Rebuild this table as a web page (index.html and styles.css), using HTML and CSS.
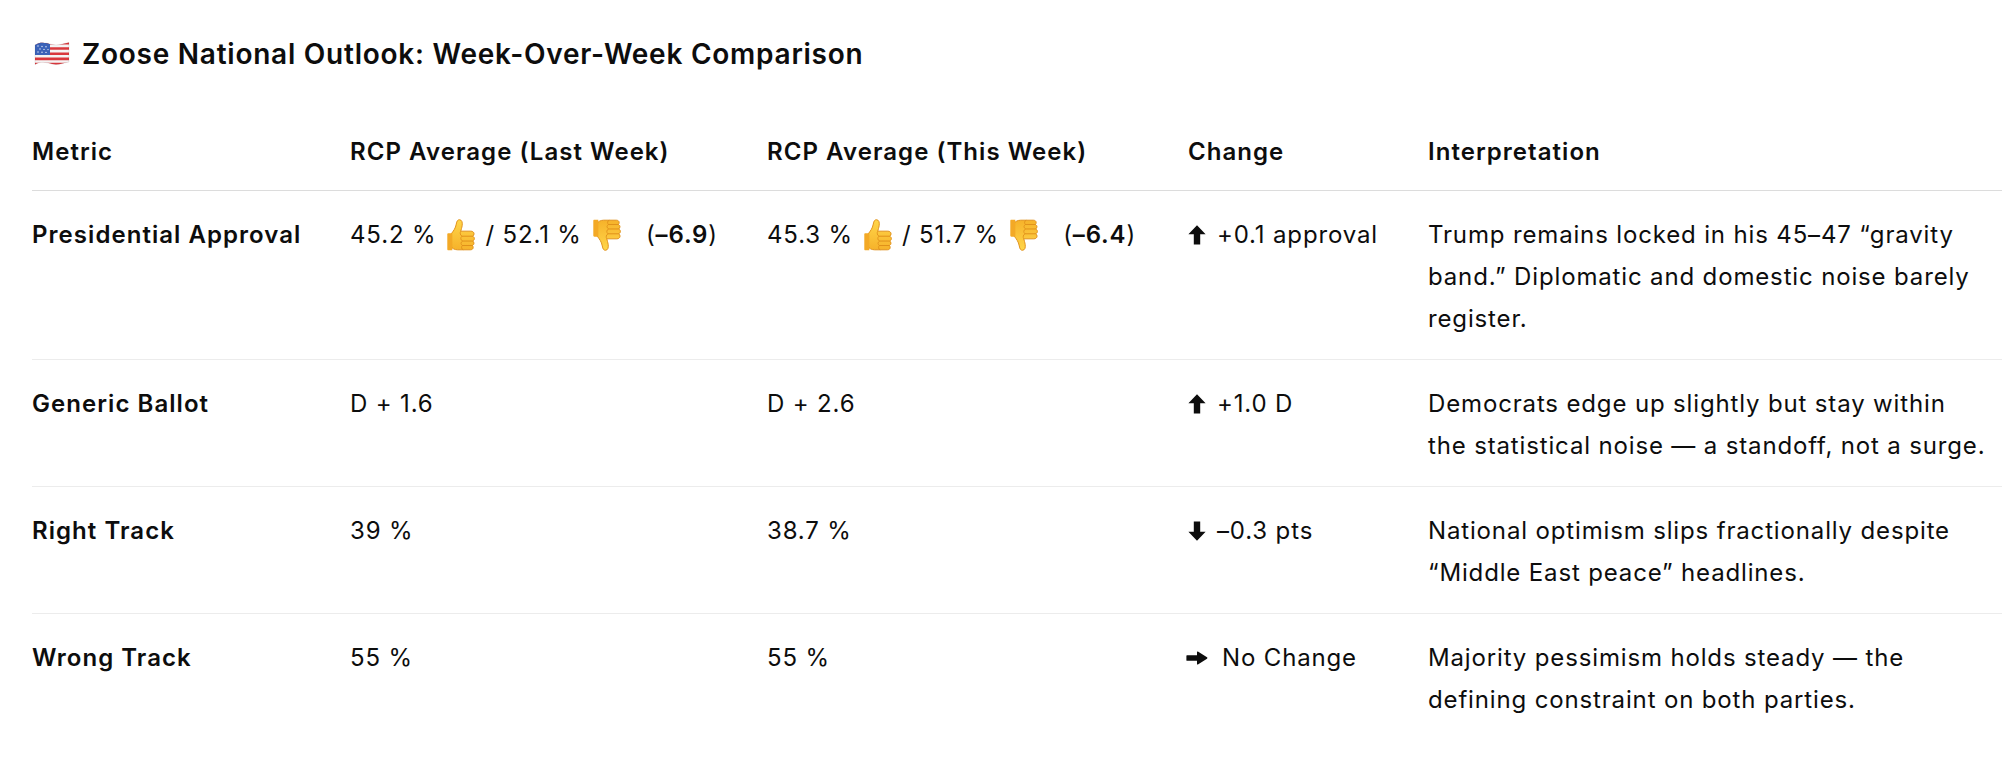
FILE: index.html
```html
<!DOCTYPE html>
<html lang="en">
<head>
<meta charset="utf-8">
<title>Zoose National Outlook</title>
<link rel="stylesheet" href="styles.css">
</head>
<body>
<main class="page">
  <h3 class="title">
    <svg class="flag" viewBox="0 0 36 28" aria-hidden="true">
      <defs>
        <clipPath id="wave">
          <path d="M1 5 C7 1 12 3 18 4.5 C24 6 29 3.5 35 2.5 V22 C29 23 24 25.5 18 24 C12 22.5 7 21 1 24.5 Z"/>
        </clipPath>
      </defs>
      <g clip-path="url(#wave)">
        <rect x="0" y="0" width="36" height="28" fill="#f4f4f4"/>
        <path d="M0 2 H36 V4.6 H0Z M0 7.2 H36 V9.8 H0Z M0 12.4 H36 V15 H0Z M0 17.6 H36 V20.2 H0Z M0 22.8 H36 V25.4 H0Z" fill="#d9383d"/>
        <rect x="0" y="0" width="16" height="15" fill="#3b62b8"/>
        <g fill="#e9eefb">
          <circle cx="4" cy="6" r="0.7"/><circle cx="8" cy="6.5" r="0.7"/><circle cx="12" cy="6.8" r="0.7"/>
          <circle cx="6" cy="9" r="0.7"/><circle cx="10" cy="9.4" r="0.7"/><circle cx="14" cy="9.6" r="0.7"/>
          <circle cx="4" cy="12" r="0.7"/><circle cx="8" cy="12.2" r="0.7"/><circle cx="12" cy="12.4" r="0.7"/>
        </g>
      </g>
      <path d="M1 5 C7 1 12 3 18 4.5 C24 6 29 3.5 35 2.5 V22 C29 23 24 25.5 18 24 C12 22.5 7 21 1 24.5 Z" fill="none" stroke="rgba(0,0,0,0.12)" stroke-width="0.6"/>
    </svg>
    <span>Zoose National Outlook: Week-Over-Week Comparison</span>
  </h3>

  <table class="outlook">
    <colgroup>
      <col class="c-metric"><col class="c-last"><col class="c-this"><col class="c-change"><col class="c-interp">
    </colgroup>
    <thead>
      <tr>
        <th>Metric</th>
        <th>RCP Average (Last Week)</th>
        <th>RCP Average (This Week)</th>
        <th>Change</th>
        <th>Interpretation</th>
      </tr>
    </thead>
    <tbody>
      <tr>
        <td class="metric">Presidential Approval</td>
        <td>45.2 %<svg class="emoji" viewBox="2 1 27 31" aria-hidden="true"><use href="#thumb"/></svg>/ 52.1 %<svg class="emoji down" viewBox="2 1 27 31" aria-hidden="true"><use href="#thumb"/></svg>&nbsp; (<b>–6.9</b>)</td>
        <td>45.3 %<svg class="emoji" viewBox="2 1 27 31" aria-hidden="true"><use href="#thumb"/></svg>/ 51.7 %<svg class="emoji down" viewBox="2 1 27 31" aria-hidden="true"><use href="#thumb"/></svg>&nbsp; (<b>–6.4</b>)</td>
        <td><svg class="arrow" viewBox="0 0 18 20" aria-hidden="true"><use href="#up"/></svg>+0.1 approval</td>
        <td>Trump remains locked in his 45–47 “gravity<br>band.” Diplomatic and domestic noise barely<br>register.</td>
      </tr>
      <tr>
        <td class="metric">Generic Ballot</td>
        <td>D + 1.6</td>
        <td>D + 2.6</td>
        <td><svg class="arrow" viewBox="0 0 18 20" aria-hidden="true"><use href="#up"/></svg>+1.0 D</td>
        <td>Democrats edge up slightly but stay within<br>the statistical noise — a standoff, not a surge.</td>
      </tr>
      <tr>
        <td class="metric">Right Track</td>
        <td>39 %</td>
        <td>38.7 %</td>
        <td><svg class="arrow" viewBox="0 0 18 20" aria-hidden="true"><use href="#down"/></svg>–0.3 pts</td>
        <td>National optimism slips fractionally despite<br>“Middle East peace” headlines.</td>
      </tr>
      <tr>
        <td class="metric">Wrong Track</td>
        <td>55 %</td>
        <td>55 %</td>
        <td><svg class="arrow-r" viewBox="0 0 22 14" aria-hidden="true"><use href="#right"/></svg>No Change</td>
        <td>Majority pessimism holds steady — the<br>defining constraint on both parties.</td>
      </tr>
    </tbody>
  </table>

  <svg class="defs" width="0" height="0" aria-hidden="true">
    <defs>
      <linearGradient id="skin" x1="0" y1="0" x2="0" y2="1">
        <stop offset="0" stop-color="#ffd64a"/>
        <stop offset="1" stop-color="#f6b22a"/>
      </linearGradient>
      <g id="thumb">
        <path d="M6.5 15.5 C8.5 13 10.5 10.5 11.2 6.5 C11.6 3.8 12.6 2.4 14.3 2.6 C16.4 2.9 16.9 5 16.6 7.6 C16.3 10 15.6 11.6 15.3 13 L24.5 13 C26.3 13 27.4 14.1 27.4 15.5 C27.4 16.5 26.9 17.2 26.2 17.6 C27.1 18 27.7 18.8 27.7 19.8 C27.7 20.8 27.1 21.6 26.2 22 C26.9 22.4 27.3 23.1 27.3 24 C27.3 25 26.7 25.8 25.8 26.1 C26.3 26.5 26.6 27.1 26.6 27.8 C26.6 29.2 25.5 30 24 30 L12.5 30 C9.5 30 7.4 28.6 6.5 27.2 Z" fill="url(#skin)" stroke="#e0901a" stroke-width="0.9" stroke-linejoin="round"/>
        <path d="M16.5 17.6 H26 M16.8 22 H26 M16.8 26.1 H25.6" stroke="#e0901a" stroke-width="0.9" fill="none" stroke-linecap="round"/>
        <path d="M15.3 13 C14.4 14.5 14.6 16.8 16.5 17.6 C14.8 18.6 15 21.2 16.8 22 C15 23 15.2 25.4 16.8 26.1 C15.5 27 15.8 29.5 17.5 30" stroke="#e0901a" stroke-width="0.8" fill="none"/>
        <path d="M4 15 H7.6 V30.5 H4 C3.3 30.5 3 30 3 29.4 V16 C3 15.4 3.3 15 4 15 Z" fill="#f3a926"/>
      </g>
      <path id="up" d="M9 0.3 L17.6 9.3 H12.2 V19.6 H5.8 V9.3 H0.4 Z" fill="#0d0d0d"/>
      <path id="down" d="M9 19.7 L17.6 10.7 H12.2 V0.4 H5.8 V10.7 H0.4 Z" fill="#0d0d0d"/>
      <path id="right" d="M1 4.2 H11 V1 C11 0.5 11.5 0.3 11.9 0.6 L21 6.3 C21.5 6.6 21.5 7.4 21 7.7 L11.9 13.4 C11.5 13.7 11 13.5 11 13 V9.8 H1 C0.6 9.8 0.4 9.5 0.4 9.2 V4.8 C0.4 4.5 0.6 4.2 1 4.2 Z" fill="#0d0d0d"/>
    </defs>
  </svg>
</main>
</body>
</html>
```

FILE: styles.css
```css
html, body {
  margin: 0;
  padding: 0;
  background: #ffffff;
}

body {
  font-family: Inter, "Noto Sans", "Liberation Sans", sans-serif;
  color: #0d0d0d;
  font-size: 24px;
  line-height: 42px;
  -webkit-font-smoothing: antialiased;
}

.page {
  padding: 34px 10px 0 32px;
}

.title {
  display: flex;
  align-items: center;
  gap: 12px;
  margin: 0 0 36px 2px;
  font-size: 28px;
  line-height: 40px;
  font-weight: 600;
  letter-spacing: 0.75px;
}

.flag {
  width: 36px;
  height: 28px;
  flex: none;
}

.outlook {
  width: 100%;
  border-collapse: collapse;
  table-layout: fixed;
}

.c-metric { width: 318px; }
.c-last { width: 417px; }
.c-this { width: 421px; }
.c-change { width: 240px; }
.c-interp { width: auto; }

.outlook th,
.outlook td {
  text-align: left;
  vertical-align: top;
  white-space: nowrap;
  letter-spacing: 0.85px;
}

.outlook th {
  padding: 21px 16px 17px 0;
  font-weight: 600;
  letter-spacing: 1.05px;
  border-bottom: 1px solid #dcdcdc;
}

.outlook td {
  padding: 23px 16px 19px 0;
  font-weight: 400;
  border-bottom: 1px solid #ececec;
}

.outlook tbody tr:last-child td {
  border-bottom: none;
}

.outlook td.metric {
  font-weight: 600;
  letter-spacing: 1.05px;
}

.outlook b {
  font-weight: 600;
}

.emoji {
  width: 30px;
  height: 34px;
  vertical-align: -9px;
  margin: 0 9px 0 10px;
}

.emoji.down {
  transform: scaleY(-1);
}

.arrow {
  width: 18px;
  height: 20px;
  vertical-align: -2px;
  margin-right: 11px;
}

.arrow-r {
  width: 22px;
  height: 14px;
  vertical-align: 1px;
  margin: 0 14px 0 -2px;
}

.defs {
  position: absolute;
  width: 0;
  height: 0;
  overflow: hidden;
}
```
